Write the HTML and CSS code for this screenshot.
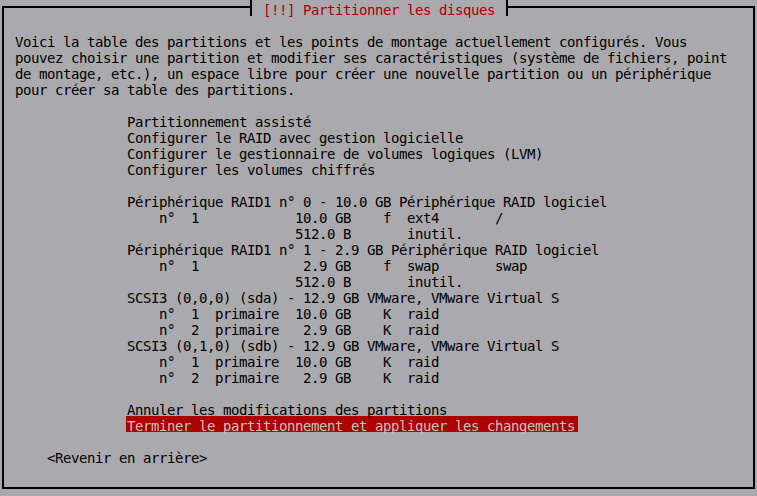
FILE: index.html
```html
<!DOCTYPE html>
<html lang="fr">
<head>
    <meta charset="UTF-8">
    <title>[!!] Partitionner les disques</title>
    <link rel="stylesheet" href="styles.css">
</head>
<body>
    <div class="frame">
        <div class="title">[!!] Partitionner les disques</div>

        <div class="intro">
            <div class="row">Voici la table des partitions et les points de montage actuellement configurés. Vous</div>
            <div class="row">pouvez choisir une partition et modifier ses caractéristiques (système de fichiers, point</div>
            <div class="row">de montage, etc.), un espace libre pour créer une nouvelle partition ou un périphérique</div>
            <div class="row">pour créer sa table des partitions.</div>
        </div>

        <div class="menu">
            <div class="group">
                <div class="row">Partitionnement assisté</div>
                <div class="row">Configurer le RAID avec gestion logicielle</div>
                <div class="row">Configurer le gestionnaire de volumes logiques (LVM)</div>
                <div class="row">Configurer les volumes chiffrés</div>
            </div>
            <div class="group">
                <div class="row">Périphérique RAID1 n° 0 - 10.0 GB Périphérique RAID logiciel</div>
                <div class="row">    n°  1            10.0 GB    f  ext4       /</div>
                <div class="row">                     512.0 B       inutil.</div>
                <div class="row">Périphérique RAID1 n° 1 - 2.9 GB Périphérique RAID logiciel</div>
                <div class="row">    n°  1             2.9 GB    f  swap       swap</div>
                <div class="row">                     512.0 B       inutil.</div>
                <div class="row">SCSI3 (0,0,0) (sda) - 12.9 GB VMware, VMware Virtual S</div>
                <div class="row">    n°  1  primaire  10.0 GB    K  raid</div>
                <div class="row">    n°  2  primaire   2.9 GB    K  raid</div>
                <div class="row">SCSI3 (0,1,0) (sdb) - 12.9 GB VMware, VMware Virtual S</div>
                <div class="row">    n°  1  primaire  10.0 GB    K  raid</div>
                <div class="row">    n°  2  primaire   2.9 GB    K  raid</div>
            </div>
            <div class="group">
                <div class="row">Annuler les modifications des partitions</div>
                <div class="row selected">Terminer le partitionnement et appliquer les changements</div>
            </div>
        </div>

        <div class="row back">&lt;Revenir en arrière&gt;</div>
    </div>
</body>
</html>
```

FILE: styles.css
```css
*{
    margin: 0;
    padding: 0;
    box-sizing: border-box;
}
body{
    background: #aaa9ad;
    color: #000;
    font-family: "DejaVu Sans Mono", "Liberation Mono", monospace;
    font-size: 14px;
    letter-spacing: -0.4287px;
    line-height: 20px;
}
/* cadre principal de la boîte de dialogue */
.frame{
    position: relative;
    width: 753px;
    height: 483px;
    margin: 6px 0 0 2px;
    padding: 24px 0 0 11px;
    border: 2px solid #000;
}
/* titre posé sur la bordure du haut */
.title{
    position: absolute;
    top: -8px;
    left: 246px;
    width: 258px;
    height: 16px;
    padding: 0 11px;
    background: #aaa9ad;
    border-left: 2px solid #000;
    border-right: 2px solid #000;
    color: #ad0000;
    white-space: pre;
}
/* une ligne de console : 16px de haut, 8px par caractère */
.row{
    height: 16px;
    white-space: pre;
}
.menu{
    margin: 16px 0 0 112px;
}
.group + .group{
    margin-top: 16px;
}
.selected{
    width: 452px;
    margin-left: -1px;
    padding-left: 1px;
    background: #ad0000;
    color: #c4c3c7;
}
.back{
    margin: 16px 0 0 32px;
}
```
